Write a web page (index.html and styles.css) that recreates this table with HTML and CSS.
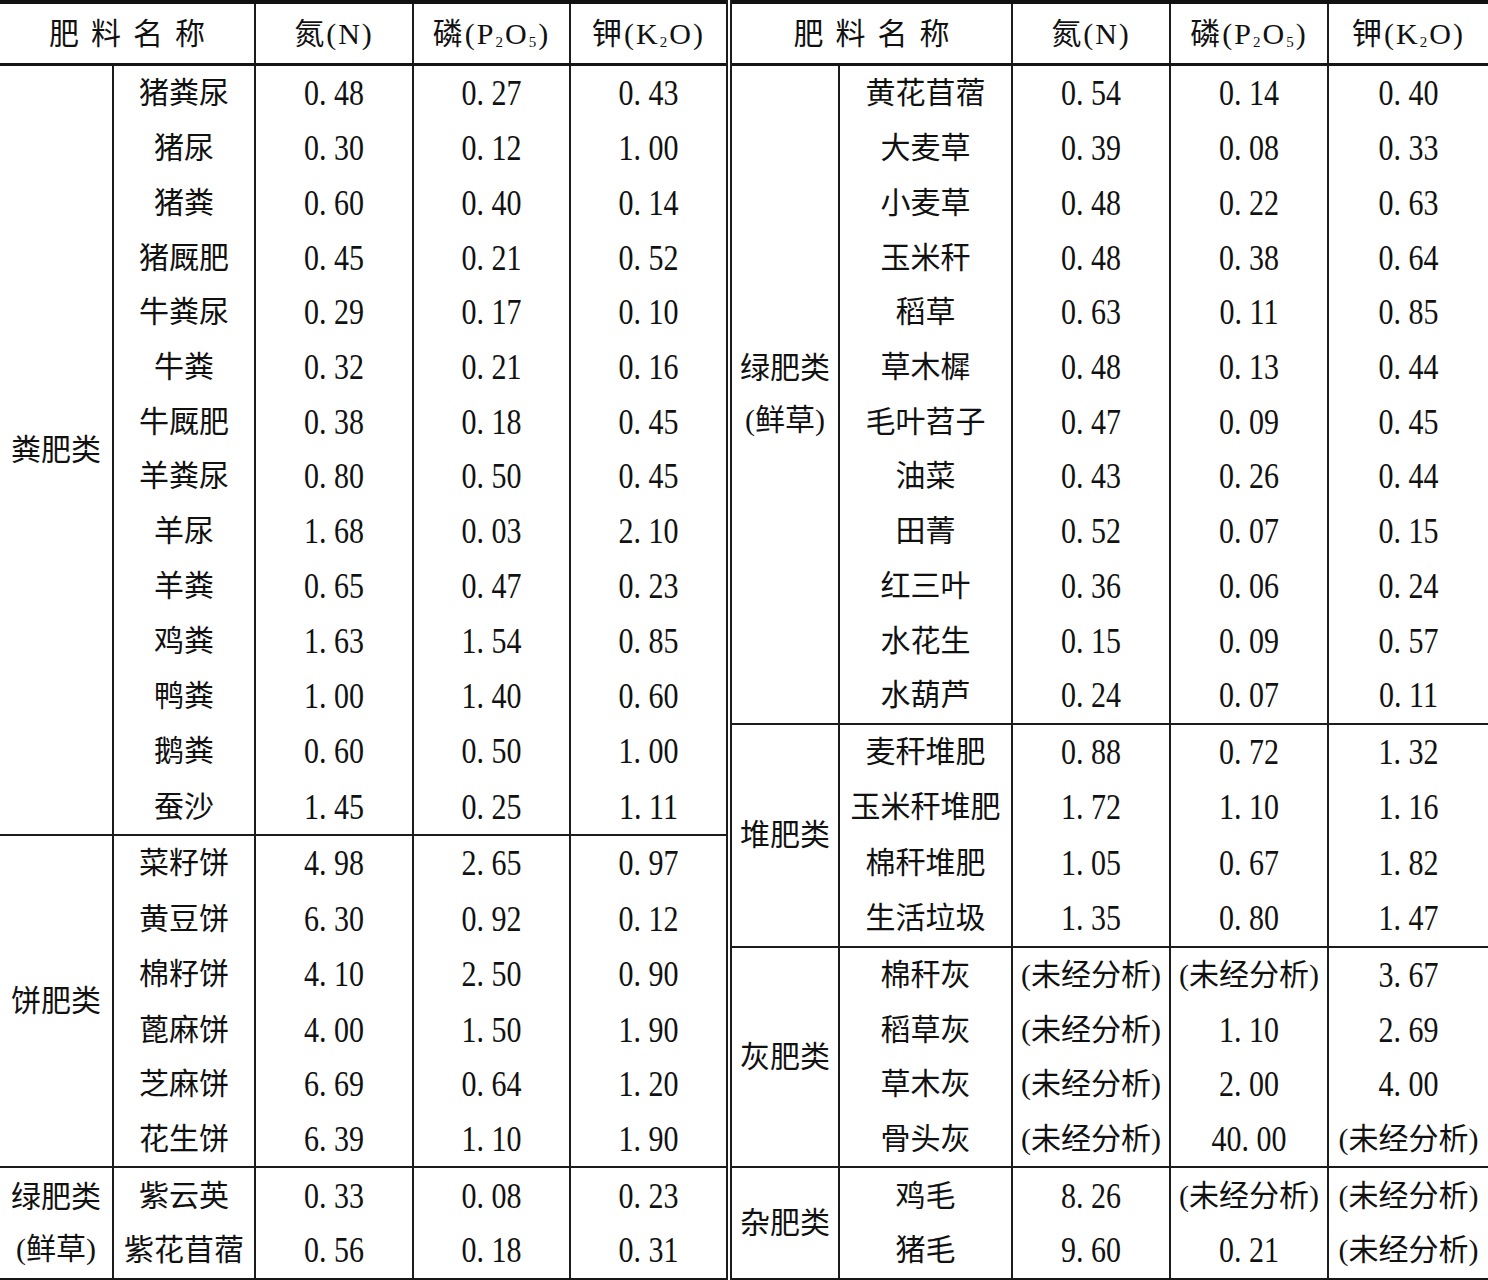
FILE: index.html
```html
<!DOCTYPE html>
<html lang="zh-CN">
<head>
<meta charset="utf-8">
<title>肥料养分含量</title>
<link rel="stylesheet" href="styles.css">
</head>
<body>
<table class="tbl">
<colgroup>
<col class="c1"><col class="c2"><col class="c3"><col class="c4"><col class="c5">
<col class="c6"><col class="c7"><col class="c8"><col class="c9"><col class="c10">
</colgroup>
<thead>
<tr>
<th colspan="2" class="ttl">肥料名称</th>
<th class="hd">氮(N)</th>
<th class="hd">磷(P<sub>2</sub>O<sub>5</sub>)</th>
<th class="hd lb">钾(K<sub>2</sub>O)</th>
<th colspan="2" class="ttl d">肥料名称</th>
<th class="hd">氮(N)</th>
<th class="hd">磷(P<sub>2</sub>O<sub>5</sub>)</th>
<th class="hd">钾(K<sub>2</sub>O)</th>
</tr>
</thead>
<tbody>
<tr><td rowspan="14" class="cat">粪肥类</td><td>猪粪尿</td><td><span class="n">0. 48</span></td><td><span class="n">0. 27</span></td><td class="lb"><span class="n">0. 43</span></td>
<td rowspan="12" class="cat d two">绿肥类<br>(鲜草)</td><td>黄花苜蓿</td><td><span class="n">0. 54</span></td><td><span class="n">0. 14</span></td><td><span class="n">0. 40</span></td></tr>
<tr><td>猪尿</td><td><span class="n">0. 30</span></td><td><span class="n">0. 12</span></td><td class="lb"><span class="n">1. 00</span></td>
<td>大麦草</td><td><span class="n">0. 39</span></td><td><span class="n">0. 08</span></td><td><span class="n">0. 33</span></td></tr>
<tr><td>猪粪</td><td><span class="n">0. 60</span></td><td><span class="n">0. 40</span></td><td class="lb"><span class="n">0. 14</span></td>
<td>小麦草</td><td><span class="n">0. 48</span></td><td><span class="n">0. 22</span></td><td><span class="n">0. 63</span></td></tr>
<tr><td>猪厩肥</td><td><span class="n">0. 45</span></td><td><span class="n">0. 21</span></td><td class="lb"><span class="n">0. 52</span></td>
<td>玉米秆</td><td><span class="n">0. 48</span></td><td><span class="n">0. 38</span></td><td><span class="n">0. 64</span></td></tr>
<tr><td>牛粪尿</td><td><span class="n">0. 29</span></td><td><span class="n">0. 17</span></td><td class="lb"><span class="n">0. 10</span></td>
<td>稻草</td><td><span class="n">0. 63</span></td><td><span class="n">0. 11</span></td><td><span class="n">0. 85</span></td></tr>
<tr><td>牛粪</td><td><span class="n">0. 32</span></td><td><span class="n">0. 21</span></td><td class="lb"><span class="n">0. 16</span></td>
<td>草木樨</td><td><span class="n">0. 48</span></td><td><span class="n">0. 13</span></td><td><span class="n">0. 44</span></td></tr>
<tr><td>牛厩肥</td><td><span class="n">0. 38</span></td><td><span class="n">0. 18</span></td><td class="lb"><span class="n">0. 45</span></td>
<td>毛叶苕子</td><td><span class="n">0. 47</span></td><td><span class="n">0. 09</span></td><td><span class="n">0. 45</span></td></tr>
<tr><td>羊粪尿</td><td><span class="n">0. 80</span></td><td><span class="n">0. 50</span></td><td class="lb"><span class="n">0. 45</span></td>
<td>油菜</td><td><span class="n">0. 43</span></td><td><span class="n">0. 26</span></td><td><span class="n">0. 44</span></td></tr>
<tr><td>羊尿</td><td><span class="n">1. 68</span></td><td><span class="n">0. 03</span></td><td class="lb"><span class="n">2. 10</span></td>
<td>田菁</td><td><span class="n">0. 52</span></td><td><span class="n">0. 07</span></td><td><span class="n">0. 15</span></td></tr>
<tr><td>羊粪</td><td><span class="n">0. 65</span></td><td><span class="n">0. 47</span></td><td class="lb"><span class="n">0. 23</span></td>
<td>红三叶</td><td><span class="n">0. 36</span></td><td><span class="n">0. 06</span></td><td><span class="n">0. 24</span></td></tr>
<tr><td>鸡粪</td><td><span class="n">1. 63</span></td><td><span class="n">1. 54</span></td><td class="lb"><span class="n">0. 85</span></td>
<td>水花生</td><td><span class="n">0. 15</span></td><td><span class="n">0. 09</span></td><td><span class="n">0. 57</span></td></tr>
<tr><td>鸭粪</td><td><span class="n">1. 00</span></td><td><span class="n">1. 40</span></td><td class="lb"><span class="n">0. 60</span></td>
<td>水葫芦</td><td><span class="n">0. 24</span></td><td><span class="n">0. 07</span></td><td><span class="n">0. 11</span></td></tr>
<tr><td>鹅粪</td><td><span class="n">0. 60</span></td><td><span class="n">0. 50</span></td><td class="lb"><span class="n">1. 00</span></td>
<td rowspan="4" class="cat d t">堆肥类</td><td class="t">麦秆堆肥</td><td class="t"><span class="n">0. 88</span></td><td class="t"><span class="n">0. 72</span></td><td class="t"><span class="n">1. 32</span></td></tr>
<tr><td>蚕沙</td><td><span class="n">1. 45</span></td><td><span class="n">0. 25</span></td><td class="lb"><span class="n">1. 11</span></td>
<td>玉米秆堆肥</td><td><span class="n">1. 72</span></td><td><span class="n">1. 10</span></td><td><span class="n">1. 16</span></td></tr>
<tr><td rowspan="6" class="cat t">饼肥类</td><td class="t">菜籽饼</td><td class="t"><span class="n">4. 98</span></td><td class="t"><span class="n">2. 65</span></td><td class="t lb"><span class="n">0. 97</span></td>
<td>棉秆堆肥</td><td><span class="n">1. 05</span></td><td><span class="n">0. 67</span></td><td><span class="n">1. 82</span></td></tr>
<tr><td>黄豆饼</td><td><span class="n">6. 30</span></td><td><span class="n">0. 92</span></td><td class="lb"><span class="n">0. 12</span></td>
<td>生活垃圾</td><td><span class="n">1. 35</span></td><td><span class="n">0. 80</span></td><td><span class="n">1. 47</span></td></tr>
<tr><td>棉籽饼</td><td><span class="n">4. 10</span></td><td><span class="n">2. 50</span></td><td class="lb"><span class="n">0. 90</span></td>
<td rowspan="4" class="cat d t">灰肥类</td><td class="t">棉秆灰</td><td class="t">(未经分析)</td><td class="t">(未经分析)</td><td class="t"><span class="n">3. 67</span></td></tr>
<tr><td>蓖麻饼</td><td><span class="n">4. 00</span></td><td><span class="n">1. 50</span></td><td class="lb"><span class="n">1. 90</span></td>
<td>稻草灰</td><td>(未经分析)</td><td><span class="n">1. 10</span></td><td><span class="n">2. 69</span></td></tr>
<tr><td>芝麻饼</td><td><span class="n">6. 69</span></td><td><span class="n">0. 64</span></td><td class="lb"><span class="n">1. 20</span></td>
<td>草木灰</td><td>(未经分析)</td><td><span class="n">2. 00</span></td><td><span class="n">4. 00</span></td></tr>
<tr><td>花生饼</td><td><span class="n">6. 39</span></td><td><span class="n">1. 10</span></td><td class="lb"><span class="n">1. 90</span></td>
<td>骨头灰</td><td>(未经分析)</td><td><span class="n">40. 00</span></td><td>(未经分析)</td></tr>
<tr><td rowspan="2" class="cat t two">绿肥类<br>(鲜草)</td><td class="t">紫云英</td><td class="t"><span class="n">0. 33</span></td><td class="t"><span class="n">0. 08</span></td><td class="t lb"><span class="n">0. 23</span></td>
<td rowspan="2" class="cat d t">杂肥类</td><td class="t">鸡毛</td><td class="t"><span class="n">8. 26</span></td><td class="t">(未经分析)</td><td class="t">(未经分析)</td></tr>
<tr class="last"><td>紫花苜蓿</td><td><span class="n">0. 56</span></td><td><span class="n">0. 18</span></td><td class="lb"><span class="n">0. 31</span></td>
<td>猪毛</td><td><span class="n">9. 60</span></td><td><span class="n">0. 21</span></td><td>(未经分析)</td></tr>
</tbody>
</table>
</body>
</html>
```
FILE: styles.css
```css
html, body {
  margin: 0;
  padding: 0;
  background: #ffffff;
}

.tbl {
  border-collapse: collapse;
  table-layout: fixed;
  width: 1488px;
  font-family: "Liberation Serif", "Noto Sans CJK SC", serif;
  font-size: 30px;
  color: #111111;
  border-top: 4px solid #111111;
}

.c1 { width: 113px; }
.c2 { width: 142px; }
.c3 { width: 158px; }
.c4 { width: 157px; }
.c5 { width: 159px; }
.c6 { width: 110px; }
.c7 { width: 173px; }
.c8 { width: 158px; }
.c9 { width: 158px; }
.c10 { width: 160px; }

.tbl th,
.tbl td {
  padding: 0;
  text-align: center;
  vertical-align: middle;
  white-space: nowrap;
  font-weight: normal;
  line-height: 1;
  border-left: 2px solid #1c1c1c;
  border-right: 2px solid #1c1c1c;
  height: 54.72px;
}

.tbl th {
  height: 59px;
  border-bottom: 3px solid #161616;
}

.tbl tr > :first-child {
  border-left: none;
}

.tbl tr > :last-child {
  border-right: none;
}

.tbl .t {
  border-top: 2px solid #1c1c1c;
}

.tbl .d {
  border-left: 6px double #1c1c1c;
}

.tbl .lb {
  border-right: 6px double #1c1c1c;
}

.tbl .last td,
.tbl .cat[rowspan="2"] {
  border-bottom: 3px solid #161616;
}

.ttl {
  letter-spacing: 12px;
  text-indent: 12px;
}

.hd {
  letter-spacing: 2px;
}

.tbl sub {
  font-size: 15px;
  vertical-align: -3px;
  line-height: 0;
}

.two {
  line-height: 52px !important;
}

.n {
  display: inline-block;
  transform: scaleY(1.22);
}
```
